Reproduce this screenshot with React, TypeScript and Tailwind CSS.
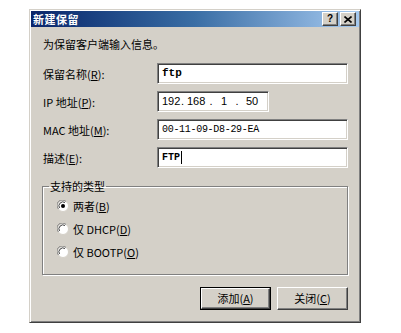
import React from "react";

const cjk = { fontFamily: '"Noto Sans CJK SC", "Liberation Sans", sans-serif' };
const mono = { fontFamily: '"Liberation Mono", "Noto Sans CJK SC", monospace' };

function U({ children }: { children: React.ReactNode }) {
  return <span className="underline underline-offset-1">{children}</span>;
}

function Field({ label, children, width = "w-[191px]" }: { label: React.ReactNode; children?: React.ReactNode; width?: string }) {
  return (
    <div className="flex items-center">
      <div className="w-[114px] text-[11px] leading-4 text-black">{label}</div>
      <div
        className={`${width} h-[21px] bg-white border border-t-[#808080] border-l-[#808080] border-r-white border-b-white shadow-[inset_1px_1px_0_#404040,inset_-1px_-1px_0_#d4d0c8] flex items-center px-[4px] text-black`}
      >
        {children}
      </div>
    </div>
  );
}

function Radio({ checked, label }: { checked?: boolean; label: React.ReactNode }) {
  return (
    <div className="flex items-center h-4 gap-[4px] text-[11px] text-black">
      <svg width="12" height="12" viewBox="0 0 12 12">
        <circle cx="6" cy="6" r="5.5" fill="#fff" stroke="#d4d0c8" />
        <path d="M1.5 9 A5 5 0 0 1 9 1.5" fill="none" stroke="#808080" strokeWidth="1" />
        <path d="M2.5 8 A4 4 0 0 1 8 2.5" fill="none" stroke="#404040" strokeWidth="1" />
        {checked && <circle cx="6" cy="6" r="2" fill="#000" />}
      </svg>
      <span>{label}</span>
    </div>
  );
}

function Button({ children, isDefault }: { children: React.ReactNode; isDefault?: boolean }) {
  return (
    <div className={`w-[71px] h-[23px] ${isDefault ? "border border-black" : ""}`}>
      <div className="w-full h-full bg-[#d4d0c8] border border-t-white border-l-white border-r-[#404040] border-b-[#404040] shadow-[inset_-1px_-1px_0_#808080] flex items-center justify-center text-[11px] text-black">
        {children}
      </div>
    </div>
  );
}

function TitleButton({ children }: { children: React.ReactNode }) {
  return (
    <div className="w-[16px] h-[14px] bg-[#d4d0c8] border border-t-white border-l-white border-r-[#404040] border-b-[#404040] shadow-[inset_-1px_-1px_0_#808080] flex items-center justify-center">
      {children}
    </div>
  );
}

export default function App() {
  return (
    <div className="w-[401px] h-[333px] bg-white pl-[29px] pt-[9px]" style={cjk}>
      <div className="w-[332px] h-[314px] bg-[#d4d0c8] border border-t-[#d4d0c8] border-l-[#d4d0c8] border-r-[#404040] border-b-[#404040] shadow-[inset_1px_1px_0_#fff,inset_-1px_-1px_0_#808080] p-[1px] flex flex-col">
        {/* Title bar */}
        <div className="h-[16px] bg-gradient-to-r from-[#0a246a] via-[#3a6ea5] to-[#a6caf0] flex items-center pl-[2px] pr-[3px]">
          <span className="text-white font-bold text-[11px] leading-none tracking-[0.5px]">新建保留</span>
          <div className="ml-auto flex gap-[2px]">
            <TitleButton>
              <span className="text-[10px] font-bold leading-none text-black" style={{ fontFamily: '"Liberation Sans", sans-serif' }}>?</span>
            </TitleButton>
            <TitleButton>
              <svg width="8" height="7" viewBox="0 0 8 7">
                <path d="M0.5 0.5 L7.5 6.5 M7.5 0.5 L0.5 6.5" stroke="#000" strokeWidth="1.6" />
              </svg>
            </TitleButton>
          </div>
        </div>

        {/* Body */}
        <div className="flex-1 flex flex-col pl-[12px] pr-[11px]">
          <p className="mt-[9px] text-[11px] leading-4 text-black">为保留客户端输入信息。</p>

          <div className="mt-[11px] flex flex-col gap-[7px]">
            <Field label={<>保留名称(<U>R</U>):</>}>
              <span className="text-[11px] font-bold" style={mono}>ftp</span>
            </Field>
            <Field label={<>IP 地址(<U>P</U>):</>} width="w-[112px]">
              <div className="flex items-center text-[11px]" style={{ fontFamily: '"Liberation Sans", sans-serif' }}>
                <span className="w-[16px] text-center">192</span>
                <span className="w-[9px] text-center">.</span>
                <span className="w-[18px] text-center">168</span>
                <span className="w-[12px] text-center">.</span>
                <span className="w-[14px] text-center">1</span>
                <span className="w-[12px] text-center">.</span>
                <span className="w-[18px] text-center">50</span>
              </div>
            </Field>
            <Field label={<>MAC 地址(<U>M</U>):</>}>
              <span className="text-[10px] tracking-[-0.3px]" style={mono}>00-11-09-D8-29-EA</span>
            </Field>
            <Field label={<>描述(<U>E</U>):</>}>
              <span className="text-[10px] font-bold" style={mono}>FTP</span>
              <span className="w-px h-[13px] bg-black ml-[1px]" />
            </Field>
          </div>

          {/* Group box */}
          <fieldset className="mt-[10px] -ml-[1px] h-[97px] border border-[#808080] shadow-[inset_1px_1px_0_#fff,1px_1px_0_#fff] pl-[6px] pt-[4px]">
            <legend className="px-[1px] text-[11px] leading-4 text-black">支持的类型</legend>
            <div className="pl-[8px] flex flex-col gap-[7px]">
              <Radio checked label={<>两者(<U>B</U>)</>} />
              <Radio label={<>仅 DHCP(<U>D</U>)</>} />
              <Radio label={<>仅 BOOTP(<U>O</U>)</>} />
            </div>
          </fieldset>

          {/* Buttons */}
          <div className="mt-[12px] flex justify-end gap-[6px]">
            <Button isDefault>添加(<U>A</U>)</Button>
            <Button>关闭(<U>C</U>)</Button>
          </div>
        </div>
      </div>
    </div>
  );
}
